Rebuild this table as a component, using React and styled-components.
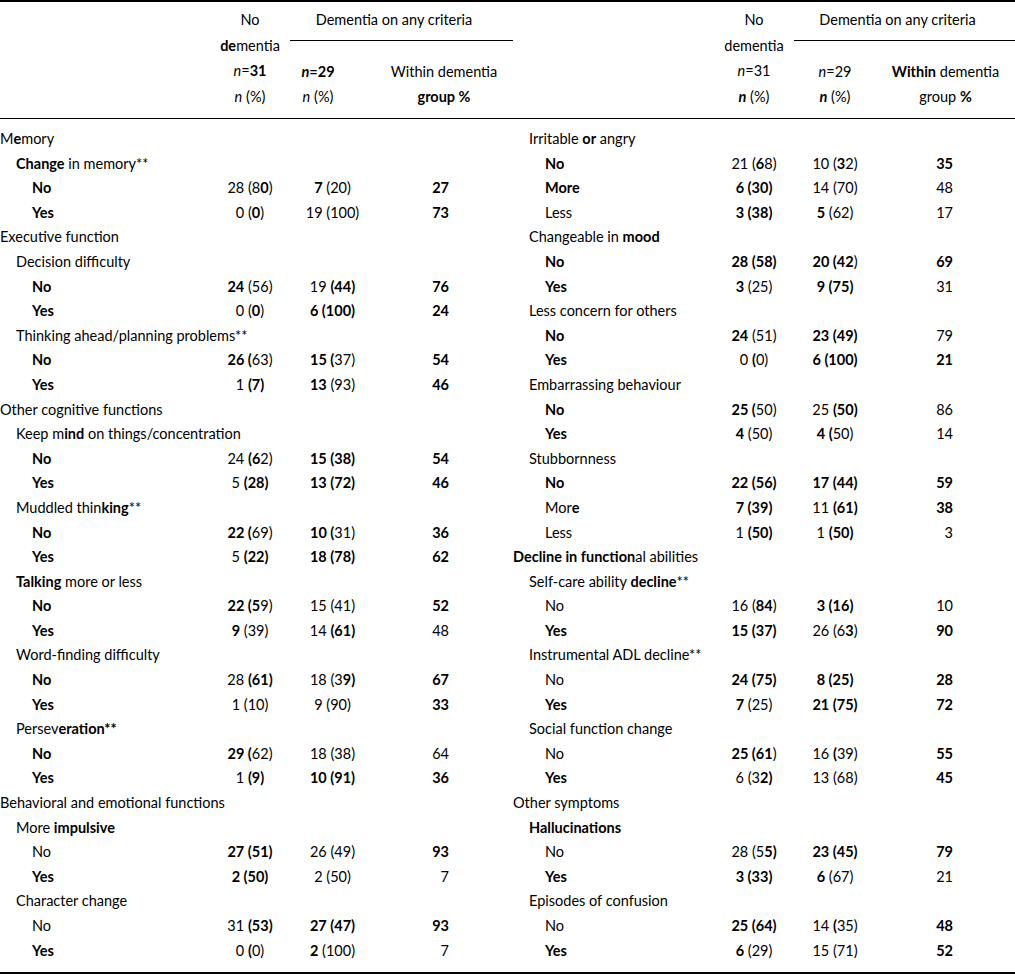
import React from "react"
import styled, { createGlobalStyle } from "styled-components"

const GlobalStyle = createGlobalStyle`
  body {
    margin: 0;
    background: #fff;
  }
`

// row strings: "level|label" for headings, "2|label|no dementia|dementia|within %" for data rows
// [..] marks bold text, {..} marks italic text
const leftRows = [
  "0|M[e]mory",
  "1|[Change] in memory**",
  "2|[No]|28 (8[0])|[7] (20)|[27]",
  "2|[Yes]|0 ([0])|19 (100)|[73]",
  "0|Executive function",
  "1|Decision difficulty",
  "2|[No]|[24] (56)|19 [(44)]|[76]",
  "2|[Yes]|0 ([0])|[6 (100)]|[24]",
  "1|Thinking ahead/planning problems**",
  "2|[No]|[26 (]63)|[15 (]37)|[54]",
  "2|[Yes]|1 [(7)]|[13] (93)|[46]",
  "0|Other cognitive functions",
  "1|Keep m[ind] on things/concentration",
  "2|[No]|24 [(6]2)|[15 (38)]|[54]",
  "2|[Yes]|5 [(28)]|[13 (72)]|[46]",
  "1|Muddled thin[king]**",
  "2|[No]|[22 (]69)|[10 (]31)|[36]",
  "2|[Yes]|5 [(22)]|[18 (78)]|[62]",
  "1|[Talking] more or less",
  "2|[No]|[22 (5]9)|15 (41)|[52]",
  "2|[Yes]|[9] (39)|14 [(61)]|48",
  "1|Word-finding difficulty",
  "2|[No]|28 [(61)]|18 (3[9)]|[67]",
  "2|[Yes]|1 (10)|9 (90)|[33]",
  "1|Persev[eration**]",
  "2|[No]|[29 (]62)|18 (38)|64",
  "2|[Yes]|1 [(9)]|[10 (91)]|[36]",
  "0|Behavioral and emotional functions",
  "1|More [impulsive]",
  "2|No|[27 (51)]|26 (49)|[93]",
  "2|[Yes]|[2 (50)]|2 (50)|7",
  "1|Character change",
  "2|No|31 [(53)]|[27 (47)]|[93]",
  "2|[Yes]|0 [(]0)|[2] (100)|7",
]

const rightRows = [
  "1|Irritable [or] angry",
  "2|[No]|21 ([6]8)|10 ([3]2)|[35]",
  "2|[More]|[6 (30)]|14 (70)|48",
  "2|Less|[3 (38)]|[5] (62)|17",
  "1|Changeable in [mood]",
  "2|[No]|[28 (58)]|[20 (42])|[69]",
  "2|[Yes]|[3] (25)|[9 (75)]|31",
  "1|Less concern for others",
  "2|[No]|[24] (51)|[23 (49)]|79",
  "2|[Yes]|0 [(]0)|[6 (100)]|[21]",
  "1|Embarrassing behaviour",
  "2|[No]|[25 (]50)|25 [(50)]|86",
  "2|[Yes]|[4] (50)|[4 (]50)|14",
  "1|Stubbornness",
  "2|[No]|[22 (56)]|[17 (44)]|[59]",
  "2|Mor[e]|[7 (39)]|11 [(61)]|[38]",
  "2|Less|1 [(50)]|1 [(50)]|3",
  "0|[Decline in function]al abilities",
  "1|Self-care ability [decline]**",
  "2|No|16 ([84])|[3 (16)]|10",
  "2|[Yes]|[15 (37)]|26 (6[3])|[90]",
  "1|Instrumental ADL decline**",
  "2|No|[24 (75)]|[8 (25)]|[28]",
  "2|[Yes]|[7] (25)|[21 (75)]|[72]",
  "1|Social function change",
  "2|No|[25 (61])|16 [(]39)|[55]",
  "2|[Yes]|6 (3[2)]|13 (68)|[45]",
  "0|Other symptoms",
  "1|[Hallucinations]",
  "2|No|28 (5[5)]|[23 (45)]|[79]",
  "2|[Yes]|[3 (33)]|[6] (67)|21",
  "1|Episodes of confusion",
  "2|No|[25 (64)]|14 [(]35)|[48]",
  "2|[Yes]|[6] (29)|15 (71)|[52]",
]

// column widths: label, no dementia, dementia, within-group — for each half
const columns = [210, 80, 85, 138, 201, 80, 82, 139]

const rich = (text) => {
  const out = []
  let bold = false
  let ital = false
  let buf = ""
  const flush = () => {
    if (!buf) return
    let node = buf
    if (ital) node = <i key={`i${out.length}`}>{node}</i>
    if (bold) node = <b key={`b${out.length}`}>{node}</b>
    out.push(node)
    buf = ""
  }
  for (const ch of text) {
    if (ch === "[") { flush(); bold = true }
    else if (ch === "]") { flush(); bold = false }
    else if (ch === "{") { flush(); ital = true }
    else if (ch === "}") { flush(); ital = false }
    else buf += ch
  }
  flush()
  return out
}

const Table = styled.table`
  width: 1015px;
  table-layout: fixed;
  border-collapse: separate;
  border-spacing: 0;
  font-family: "Lato", "Liberation Sans", sans-serif;
  font-size: 14.5px;
  color: #000;

  b {
    font-weight: 700;
  }
`

const Col = styled.col`
  width: ${p => p.$w}px;
`

const Head = styled.th`
  padding: 0;
  padding-right: ${p => p.$pr || 0}px;
  font-weight: 400;
  line-height: 25.7px;
  white-space: nowrap;
  text-align: center;
  vertical-align: top;
  border-top: ${p => (p.$top ? "2px solid #000" : "none")};
  border-bottom: 1px solid #000;
`

const TallHead = styled(Head)`
  padding-top: 5px;
  padding-bottom: 8.2px;
`

const GroupHead = styled(Head)`
  padding-top: 5px;
  padding-bottom: 7.3px;
`

const SubHead = styled(Head)`
  vertical-align: bottom;
  padding-top: 17.6px;
  padding-bottom: 8px;
`

const Body = styled.tbody`
  tr:first-child td {
    padding-top: 8px;
  }
  tr:last-child td {
    padding-bottom: 9px;
    border-bottom: 2px solid #000;
  }
`

const Label = styled.td`
  padding: 0 0 0 ${p => p.$level * 16}px;
  line-height: 24.6px;
  white-space: nowrap;
  text-align: left;
`

const Num = styled.td`
  padding: 0 ${p => p.$pr || 0}px 0 0;
  line-height: 24.6px;
  white-space: nowrap;
  text-align: ${p => (p.$right ? "right" : "center")};
`

const halfCells = (row, side, pr) => {
  const [level, label, ...vals] = row.split("|")
  const lvl = Number(level)
  if (!vals.length) {
    return [<Label key={`${side}l`} colSpan={4} $level={lvl}>{rich(label)}</Label>]
  }
  return [
    <Label key={`${side}l`} $level={lvl}>{rich(label)}</Label>,
    <Num key={`${side}a`}>{rich(vals[0])}</Num>,
    <Num key={`${side}b`}>{rich(vals[1])}</Num>,
    <Num key={`${side}c`} $right $pr={pr}>{rich(vals[2])}</Num>,
  ]
}

const headerHalf = (left) => [
  <TallHead key={`${left}lab`} rowSpan={2} $top />,
  <TallHead key={`${left}no`} rowSpan={2} $top>
    No
    <br />
    {left ? rich("[de]mentia") : "dementia"}
    <br />
    {left ? rich("{n}=[31]") : rich("{n}=31")}
    <br />
    {left ? rich("{n} (%)") : rich("[{n}] (%)")}
  </TallHead>,
  <GroupHead key={`${left}grp`} colSpan={2} $top $pr={left ? 15 : 14}>
    Dementia on any criteria
  </GroupHead>,
]

const subHeaderHalf = (left) => [
  <SubHead key={`${left}n29`} $pr={left ? 29 : 0}>
    {left ? rich("[{n}=29]") : rich("{n}=29")}
    <br />
    {left ? rich("{n} (%)") : rich("[{n}] (%)")}
  </SubHead>,
  <SubHead key={`${left}within`}>
    {left ? "Within dementia" : rich("[Within] dementia")}
    <br />
    {left ? rich("[group %]") : rich("group [%]")}
  </SubHead>,
]

export default function App() {
  return (
    <>
      <GlobalStyle />
      <Table>
        <colgroup>
          {columns.map((w, i) => <Col key={i} $w={w} />)}
        </colgroup>
        <thead>
          <tr>
            {headerHalf(true)}
            {headerHalf(false)}
          </tr>
          <tr>
            {subHeaderHalf(true)}
            {subHeaderHalf(false)}
          </tr>
        </thead>
        <Body>
          {leftRows.map((row, i) => (
            <tr key={i}>
              {halfCells(row, "L", 64)}
              {halfCells(rightRows[i], "R", 62)}
            </tr>
          ))}
        </Body>
      </Table>
    </>
  )
}
